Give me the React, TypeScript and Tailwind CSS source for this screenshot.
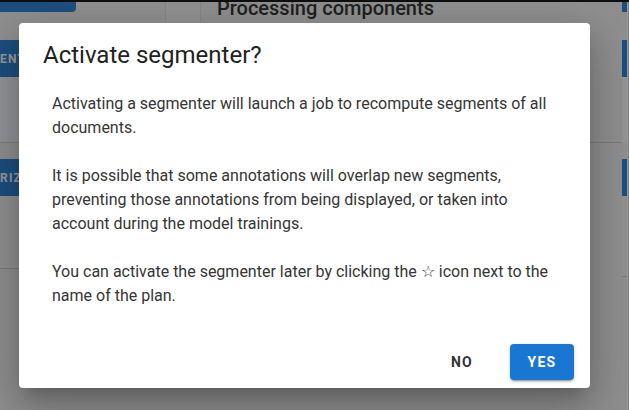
export default function App() {
  return (
    <div className="relative w-[629px] h-[410px] overflow-hidden bg-[#ececec] font-['Roboto',sans-serif]">
      {/* underlying page */}
      <div className="flex h-full">
        {/* left column */}
        <div className="w-[165px] flex flex-col">
          <div className="mt-[2px] h-[10px] w-[76px] bg-[#1976d2] rounded-br-[4px]" />
          <div className="mt-[28px] h-[37px] bg-[#1976d2] flex items-center">
            <span className="text-white text-[12px] font-bold tracking-[1.2px]">ENT</span>
          </div>
          <div className="h-[66px] bg-[#f2f6fb] border-b border-[#d0d0d0]" />
          <div className="mt-[16px] h-[37px] bg-[#1976d2] flex items-center">
            <span className="text-white text-[12px] font-bold tracking-[1.2px]">RIZ</span>
          </div>
          <div className="h-[73px] bg-[#eeeeee] border-b border-[#c8c8c8]" />
        </div>
        {/* divider box */}
        <div className="w-[36px] h-[22px] border-l border-r border-[#dcdcdc] bg-[#f0f0f0]" />
        {/* main */}
        <div className="flex-1 pl-[16px]">
          <div className="-mt-[4px] text-[20px] leading-[24px] font-medium text-[#212121]">
            Processing components
          </div>
          <div className="mt-[122px] h-px bg-[#c8c8c8]" />
        </div>
        {/* right strip */}
        <div className="w-[5px] flex flex-col">
          <div className="mt-[2px] h-[10px] bg-[#1976d2]" />
          <div className="mt-[28px] h-[37px] bg-[#1976d2]" />
          <div className="h-[66px] bg-[#f2f6fb]" />
          <div className="mt-[16px] h-[37px] bg-[#1976d2]" />
          <div className="h-[81px] bg-[#eeeeee] border-b border-[#c8c8c8]" />
        </div>
        <div className="w-px bg-white" />
        <div className="w-px bg-[#d0d0d0]" />
      </div>
      {/* app bar edge */}
      <div className="absolute top-0 left-0 right-0 h-[2px] bg-black" />
      {/* scrim */}
      <div className="absolute inset-0 bg-[rgba(33,33,33,0.46)]" />
      {/* dialog */}
      <div className="absolute left-[19px] top-[23px] w-[571px] h-[365px] bg-white rounded-[4px] flex flex-col shadow-[0_11px_15px_-7px_rgba(0,0,0,0.2),0_24px_38px_3px_rgba(0,0,0,0.14),0_9px_46px_8px_rgba(0,0,0,0.12)]">
        <h2 className="px-[24px] pt-[16px] text-[24px] leading-[32px] font-normal text-[#212121]">
          Activate segmenter?
        </h2>
        <div className="mt-[21px] px-[33px] text-[16px] leading-[24px] text-[#353535]">
          <p>Activating a segmenter will launch a job to recompute segments of all documents.</p>
          <p className="mt-[24px]">
            It is possible that some annotations will overlap new segments, preventing those annotations from being
            displayed, or taken into account during the model trainings.
          </p>
          <p className="mt-[24px]">
            You can activate the segmenter later by clicking the ☆ icon next to the name of the plan.
          </p>
        </div>
        <div className="mt-auto flex justify-end items-center pb-[8px] pr-[16px]">
          <button className="w-[64px] h-[36px] mr-[16px] rounded-[4px] text-[14px] font-bold tracking-[1.25px] text-[#333333]">
            NO
          </button>
          <button className="w-[64px] h-[36px] rounded-[4px] bg-[#1976d2] text-white text-[14px] font-bold tracking-[1.25px] shadow-[0_3px_1px_-2px_rgba(0,0,0,0.2),0_2px_2px_0_rgba(0,0,0,0.14),0_1px_5px_0_rgba(0,0,0,0.12)]">
            YES
          </button>
        </div>
      </div>
    </div>
  );
}
